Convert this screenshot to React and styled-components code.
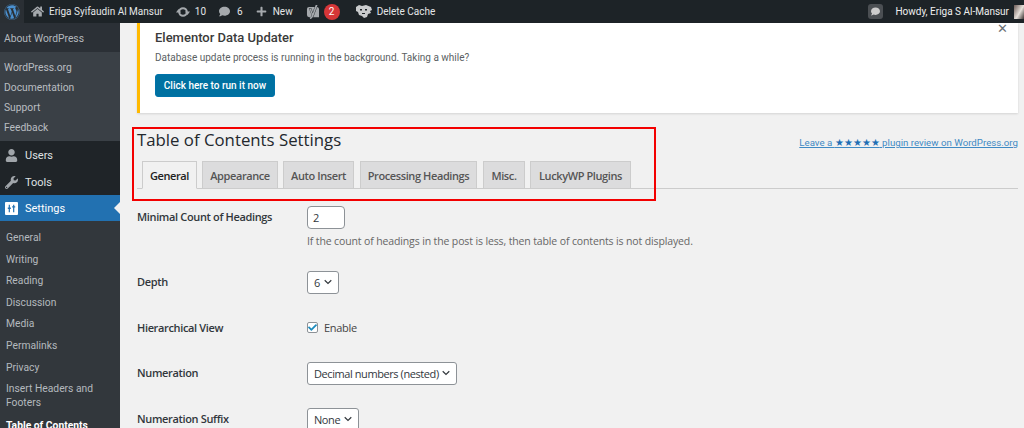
import React from 'react';
import styled, { createGlobalStyle } from 'styled-components';
import { FaWordpress, FaHome, FaComment, FaPlus, FaUser, FaWrench, FaCheck } from 'react-icons/fa';
import { SiYoast } from 'react-icons/si';

const Global = createGlobalStyle`
  html, body { margin: 0; padding: 0; width: 1024px; height: 428px; overflow: hidden; background: #f1f1f1; }
  * { box-sizing: border-box; }
  body { font-family: "Open Sans", "Noto Sans", sans-serif; color: #444; }
`;

const Page = styled.div`
  position: relative;
  width: 1024px;
  height: 428px;
  overflow: hidden;
  display: flex;
  flex-direction: column;
`;

const TopBar = styled.header`
  height: 23px;
  flex: none;
  background: #1d2327;
  display: flex;
  align-items: center;
  color: #eee;
  font-family: Roboto, sans-serif;
  font-size: 10px;
`;
const LogoCell = styled.div`
  width: 24px;
  height: 23px;
  background: #2a2f34;
  display: flex;
  align-items: center;
  justify-content: center;
  color: #4a90d0;
  margin-right: 7px;
  font-size: 16px;
`;
const BarItem = styled.div`
  display: flex;
  align-items: center;
  gap: ${p => p.$gap ?? 4}px;
  margin-right: ${p => p.$mr ?? 10}px;
  color: #e4e6e8;
  white-space: nowrap;
  svg { color: #a5a9ad; flex: none; }
`;
const Badge = styled.span`
  width: 16px;
  height: 16px;
  border-radius: 50%;
  background: #d63638;
  color: #fff;
  display: flex;
  align-items: center;
  justify-content: center;
  font-size: 10px;
`;
const BarRight = styled.div`
  margin-left: auto;
  display: flex;
  align-items: center;
`;
const Bubble = styled.div`
  width: 15px;
  height: 15px;
  background: #4b4f53;
  border-radius: 3px;
  margin-right: 12px;
  display: flex;
  align-items: center;
  justify-content: center;
  svg { color: #ccc; }
`;
const Avatar = styled.div`
  width: 10px;
  height: 14px;
  margin-left: 5px;
  background: linear-gradient(120deg, #6b5a55 0%, #e7e0da 55%, #3b3331 100%);
`;

const Body = styled.div`
  flex: 1;
  display: flex;
  min-height: 0;
`;
const Sidebar = styled.nav`
  width: 120px;
  flex: none;
  background: #32373c;
  font-family: Roboto, sans-serif;
  font-size: 10.3px;
  color: #c3c6c9;
`;
const FlyTop = styled.div`
  height: 29px;
  background: #2b3036;
  padding: 8px 0 0 4px;
  line-height: 16px;
  color: #b4b9be;
`;
const FlyList = styled.div`
  height: 89px;
  background: #3a4046;
  padding-top: 6px;
`;
const FlyItem = styled.div`
  height: 20px;
  line-height: 20px;
  padding-left: 4px;
  color: #b9bdc1;
`;
const MenuItem = styled.div`
  height: ${p => p.$h ?? 27}px;
  position: relative;
  display: flex;
  align-items: center;
  gap: 7px;
  padding: 1px 0 0 5px;
  background: ${p => (p.$active ? '#2271b1' : '#1f2428')};
  color: ${p => (p.$active ? '#fff' : '#dfe1e3')};
  font-size: 11px;
  svg { width: 13px; height: 13px; color: ${p => (p.$active ? '#fff' : '#a0a5aa')}; flex: none; }
`;
const Arrow = styled.span`
  position: absolute;
  right: 0;
  top: 7px;
  border: 6px solid transparent;
  border-right-color: #f1f1f1;
  border-left-width: 0;
`;
const SubList = styled.div`
  padding-top: 7px;
`;
const SubItem = styled.div`
  padding: 3px 6px;
  line-height: 14px;
  min-height: ${p => (p.$two ? 37 : 21.6)}px;
  color: ${p => (p.$cur ? '#fff' : '#b4b9be')};
  font-weight: ${p => (p.$cur ? 700 : 400)};
`;

const Main = styled.main`
  flex: 1;
  min-width: 0;
  padding: 0 6px 0 17px;
`;
const Notice = styled.section`
  position: relative;
  height: 90px;
  background: #fff;
  border-left: 3px solid #ffb900;
  box-shadow: 0 1px 2px rgba(0,0,0,.12);
  padding: 6px 0 0 15px;
  font-family: Roboto, sans-serif;
`;
const NoticeTitle = styled.h3`
  margin: 0;
  font-size: 13px;
  line-height: 18px;
  font-weight: 500;
  color: #3a3a3a;
`;
const NoticeText = styled.p`
  margin: 3px 0 0;
  font-size: 10px;
  line-height: 15px;
  color: #5b5f63;
`;
const NoticeButton = styled.button`
  display: block;
  margin-top: 9px;
  width: 120px;
  height: 23px;
  padding: 0;
  background: #0071a1;
  border: 1px solid #0073aa;
  border-radius: 3px;
  color: #fff;
  font-family: Roboto, sans-serif;
  font-size: 10px;
  font-weight: 500;
`;
const Close = styled.span`
  position: absolute;
  top: 0;
  right: 10px;
  font-size: 13px;
  line-height: 11px;
  color: #6a7075;
`;
const HeadRow = styled.div`
  display: flex;
  justify-content: space-between;
  align-items: flex-end;
  height: 38px;
`;
const Title = styled.h1`
  margin: 0;
  font-size: 16.8px;
  font-weight: 400;
  line-height: 24px;
  color: #23282d;
  position: relative;
  top: 1px;
`;
const ReviewLink = styled.a`
  font-family: Roboto, sans-serif;
  font-size: 9.7px;
  line-height: 14px;
  color: #3f8ac4;
  text-decoration: underline;
  position: relative;
  top: -1px;
  span { color: #1f6fb5; }
`;
const Tabs = styled.div`
  display: flex;
  height: 28px;
  margin-top: 10px;
  padding-left: 5px;
  border-bottom: 1px solid #ccc;
  flex: none;
`;
const Tab = styled.div`
  width: ${p => p.$w}px;
  height: 28px;
  margin-right: ${p => p.$mr}px;
  flex: none;
  text-align: center;
  line-height: 27px;
  font-size: 11px;
  font-weight: 600;
  letter-spacing: -0.4px;
  white-space: nowrap;
  border: 1px solid #ccc;
  border-bottom: ${p => (p.$on ? '1px solid #f1f1f1' : '1px solid #ccc')};
  background: ${p => (p.$on ? '#f1f1f1' : '#dcdcdd')};
  color: ${p => (p.$on ? '#222' : '#555')};
  position: relative;
  z-index: 1;
`;
const Row = styled.div`
  display: grid;
  grid-template-columns: 170px 1fr;
  align-items: ${p => (p.$top ? 'start' : 'center')};
  height: ${p => p.$h}px;
  padding-top: ${p => p.$pt ?? 0}px;
`;
const Label = styled.label`
  font-size: 11px;
  font-weight: 600;
  line-height: 14px;
  letter-spacing: -0.35px;
  color: #32373c;
  white-space: nowrap;
  padding-top: ${p => p.$pt ?? 0}px;
`;
const Field = styled.div`
  display: flex;
  flex-direction: column;
  align-items: flex-start;
`;
const Input = styled.div`
  width: 38px;
  height: 23px;
  background: #fff;
  border: 1px solid #8d9297;
  border-radius: 4px;
  padding-left: 5px;
  font-size: 11px;
  line-height: 21px;
  color: #32373c;
`;
const Hint = styled.p`
  margin: 5px 0 0;
  font-size: 10.5px;
  line-height: 14px;
  letter-spacing: -0.13px;
  color: #666;
  white-space: nowrap;
`;
const Select = styled.div`
  width: ${p => p.$w}px;
  height: 23px;
  background: #fff;
  border: 1px solid #8d9297;
  border-radius: 3px;
  padding: 0 6px;
  font-size: 11px;
  line-height: 21px;
  letter-spacing: -0.42px;
  color: #32373c;
  display: flex;
  justify-content: space-between;
  align-items: center;
  white-space: nowrap;
`;
const CheckRow = styled.div`
  display: flex;
  align-items: center;
  gap: 6px;
  font-size: 11px;
  letter-spacing: -0.3px;
  color: #444;
  position: relative;
  top: -1px;
`;
const Checkbox = styled.span`
  width: 11px;
  height: 11px;
  border: 1px solid #8d9297;
  border-radius: 2px;
  background: #fff;
  display: flex;
  align-items: center;
  justify-content: center;
  color: #1e8cbe;
`;
const Annotation = styled.div`
  position: absolute;
  left: 132px;
  top: 127px;
  width: 524px;
  height: 74px;
  border: 2px solid #f30000;
  z-index: 5;
  pointer-events: none;
`;

const Chevron = () => (
  <svg width="8" height="6" viewBox="0 0 9 6" fill="none" stroke="#32373c" strokeWidth="1.3"><path d="M.8 1l3.700 3.700L8.200 1" /></svg>
);
const UpdateIcon = () => (
  <svg width="14" height="12" viewBox="0 0 14 12" fill="none"><circle cx="7" cy="6" r="3.800" stroke="#a5a9ad" strokeWidth="2" /><path fill="#a5a9ad" d="M0 6.500h5L2.500 3zM14 5.500H9L11.500 9z" /></svg>
);
const SettingsIcon = () => (
  <svg viewBox="0 0 14 14"><path fill="currentColor" fillRule="evenodd" d="M1 0h12a1 1 0 0 1 1 1v12a1 1 0 0 1-1 1H1a1 1 0 0 1-1-1V1a1 1 0 0 1 1-1zm3 3v3H3v1.500h1V11h1.300V7.500h1V6h-1V3zm4.700 0v1.500h-1V6h1v5H10V6h1V4.500h-1V3z" /></svg>
);
const CacheIcon = () => (
  <svg width="17" height="13" viewBox="0 0 17 13"><path fill="#c9cbcd" d="M1 2l3-2 3 1 4-1 5 2 1 3-2 1 1 2-3 1-1 3-3 1-2-2-3-1-1-3-2-1z" /><path fill="#1d2327" d="M5 4h2v1.500H5zM10 4h2v1.500h-2zM7 8h3v1H7z" /></svg>
);

export default function App() {
  return (
    <Page>
      <Global />
      <TopBar>
        <LogoCell><FaWordpress /></LogoCell>
        <BarItem $mr={13} $gap={5}><FaHome size={13} />Eriga Syifaudin Al Mansur</BarItem>
        <BarItem $mr={13} $gap={5}><UpdateIcon />10</BarItem>
        <BarItem $mr={13} $gap={7}><FaComment size={11} />6</BarItem>
        <BarItem $mr={13} $gap={6}><FaPlus size={11} />New</BarItem>
        <BarItem $mr={15} $gap={4}><SiYoast size={14} /><Badge>2</Badge></BarItem>
        <BarItem $mr={0} $gap={5}><CacheIcon />Delete Cache</BarItem>
        <BarRight>
          <Bubble><FaComment size={9} /></Bubble>
          Howdy, Eriga S Al-Mansur
          <Avatar />
        </BarRight>
      </TopBar>
      <Body>
        <Sidebar>
          <FlyTop>About WordPress</FlyTop>
          <FlyList>
            <FlyItem>WordPress.org</FlyItem>
            <FlyItem>Documentation</FlyItem>
            <FlyItem>Support</FlyItem>
            <FlyItem>Feedback</FlyItem>
          </FlyList>
          <MenuItem><FaUser />Users</MenuItem>
          <MenuItem><FaWrench />Tools</MenuItem>
          <MenuItem $active $h={26}><SettingsIcon />Settings<Arrow /></MenuItem>
          <SubList>
            <SubItem>General</SubItem>
            <SubItem>Writing</SubItem>
            <SubItem>Reading</SubItem>
            <SubItem>Discussion</SubItem>
            <SubItem>Media</SubItem>
            <SubItem>Permalinks</SubItem>
            <SubItem>Privacy</SubItem>
            <SubItem $two>Insert Headers and Footers</SubItem>
            <SubItem $cur>Table of Contents</SubItem>
          </SubList>
        </Sidebar>
        <Main>
          <Notice>
            <NoticeTitle>Elementor Data Updater</NoticeTitle>
            <NoticeText>Database update process is running in the background. Taking a while?</NoticeText>
            <NoticeButton>Click here to run it now</NoticeButton>
            <Close>✕</Close>
          </Notice>
          <HeadRow>
            <Title>Table of Contents Settings</Title>
            <ReviewLink>Leave a <span>★★★★★</span> plugin review on WordPress.org</ReviewLink>
          </HeadRow>
          <Tabs>
            <Tab $on $w={55} $mr={5}>General</Tab>
            <Tab $w={76} $mr={5}>Appearance</Tab>
            <Tab $w={71} $mr={6}>Auto Insert</Tab>
            <Tab $w={117} $mr={6}>Processing Headings</Tab>
            <Tab $w={42} $mr={5}>Misc.</Tab>
            <Tab $w={101} $mr={0}>LuckyWP Plugins</Tab>
          </Tabs>
          <Row $top $h={63} $pt={17}>
            <Label $pt={4}>Minimal Count of Headings</Label>
            <Field>
              <Input>2</Input>
              <Hint>If the count of headings in the post is less, then table of contents is not displayed.</Hint>
            </Field>
          </Row>
          <Row $h={60}><Label>Depth</Label><Select $w={32}>6 <Chevron /></Select></Row>
          <Row $h={32}>
            <Label>Hierarchical View</Label>
            <CheckRow><Checkbox><FaCheck size={9} /></Checkbox>Enable</CheckRow>
          </Row>
          <Row $h={58}>
            <Label>Numeration</Label>
            <Select $w={150}>Decimal numbers (nested) <Chevron /></Select>
          </Row>
          <Row $h={34}>
            <Label>Numeration Suffix</Label>
            <Select $w={52}>None <Chevron /></Select>
          </Row>
        </Main>
      </Body>
      <Annotation />
    </Page>
  );
}
